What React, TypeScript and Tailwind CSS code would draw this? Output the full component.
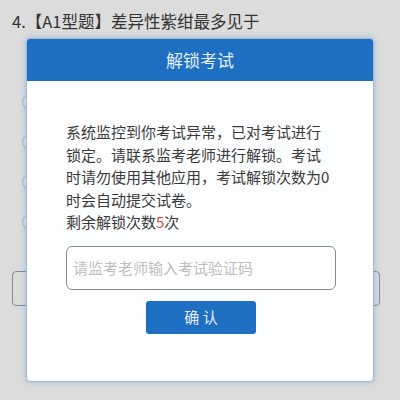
import React from "react";

const options = [0, 1, 2, 3];

export default function App() {
  return (
    <div className="relative w-[400px] h-[400px] overflow-hidden bg-[#dcdcdc] font-['Noto_Sans_CJK_SC',sans-serif] text-[#333]">
      {/* page behind the dialog */}
      <div className="pt-[8px] pl-[12px] text-[16.5px] leading-[26px]">4.【A1型题】差异性紫绀最多见于</div>
      <div className="mt-[60px] flex flex-col gap-[24px] pl-[22px]">
        {options.map((i) => (
          <div key={i} className="h-[16px] w-[16px] rounded-full border-[1.5px] border-[#a8b6c6]" />
        ))}
      </div>
      <div className="mt-[41px] ml-[12px] h-[35px] w-[368px] rounded-[4px] border-[1.5px] border-[#7d8c9c]" />

      {/* dialog */}
      <div className="absolute left-[26px] top-[38px] flex h-[344px] w-[348px] flex-col overflow-hidden rounded-[4px] border border-[#9fbad6] bg-[#fdfeff] shadow-[0_0_6px_rgba(80,140,210,0.45)]">
        <div className="flex h-[42px] shrink-0 items-center justify-center bg-[#1e6fc1] text-[17px] text-[#e6effa]">
          解锁考试
        </div>
        <div className="flex flex-col pl-[39px] pt-[40px]">
          <p className="w-[266px] text-[15px] leading-[22.5px] text-[#3a3a3a]">
            系统监控到你考试异常，已对考试进行锁定。请联系监考老师进行解锁。考试时请勿使用其他应用，考试解锁次数为0时会自动提交试卷。
          </p>
          <p className="w-[266px] text-[15px] leading-[22.5px] text-[#3a3a3a]">
            剩余解锁次数<span className="text-[#e5473f]">5</span>次
          </p>
          <input
            placeholder="请监考老师输入考试验证码"
            className="mt-[12px] h-[44px] w-[270px] rounded-[6px] border-[1.5px] border-[#8a8a8a] bg-white px-[6px] text-[15px] outline-none placeholder:text-[#bdbdbd]"
          />
          <button className="mt-[11px] ml-[80px] h-[33px] w-[110px] rounded-[3px] bg-[#1e6fc1] text-[15px] text-[#e6effa]">
            确 认
          </button>
        </div>
      </div>
    </div>
  );
}
